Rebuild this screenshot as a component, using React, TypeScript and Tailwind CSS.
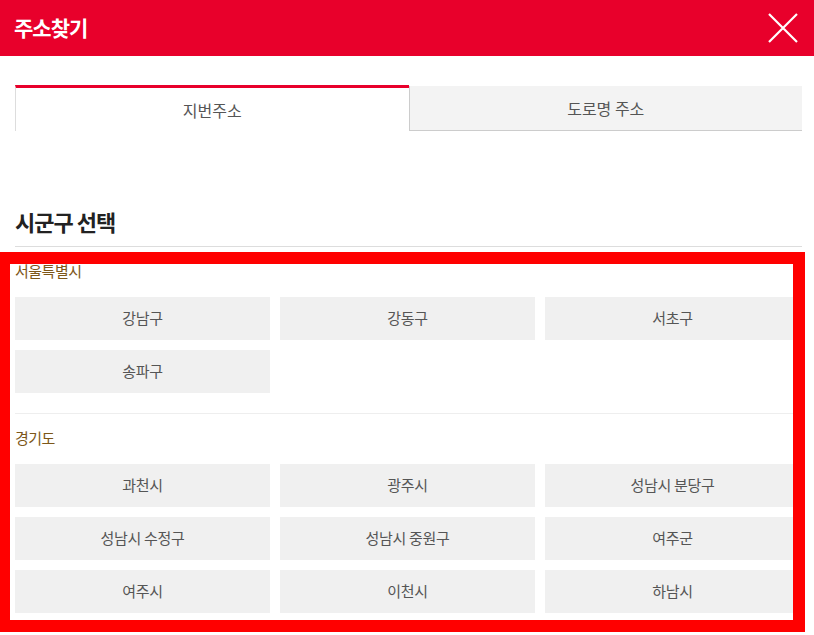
const FONT = "font-['Malgun_Gothic','Noto_Sans_CJK_KR','Noto_Sans',sans-serif]";

const groups = [
  { name: "서울특별시", items: ["강남구", "강동구", "서초구", "송파구"] },
  {
    name: "경기도",
    items: ["과천시", "광주시", "성남시 분당구", "성남시 수정구", "성남시 중원구", "여주군", "여주시", "이천시", "하남시"],
  },
];

function DistrictButton({ label }: { label: string }) {
  return (
    <button className="h-[43px] bg-[#f0f0f0] text-[15px] text-[#555] tracking-[-0.3px]">
      {label}
    </button>
  );
}

export default function App() {
  return (
    <div className={`relative w-[814px] h-[635px] overflow-hidden bg-white ${FONT}`}>
      <header className="h-[56px] bg-[#e8002b] flex items-center justify-between pl-[14px] pr-[16px]">
        <h1 className="text-white text-[21px] font-bold tracking-[-1px]">주소찾기</h1>
        <svg width="30" height="30" viewBox="0 0 30 30" fill="none" stroke="white" strokeWidth="2.2">
          <path d="M1 1L29 29M29 1L1 29" />
        </svg>
      </header>

      <div className="pl-[15px] pr-[12px]">
        <div className="mt-[29px] flex h-[46px]">
          <div className="flex-1 flex items-center justify-center border-t-[3px] border-t-[#e8002b] border-l border-l-[#ddd] bg-white text-[16px] text-[#555]">
            지번주소
          </div>
          <div className="flex-1 flex items-center justify-center mt-[1px] bg-[#f3f3f3] border-l border-l-[#ccc] border-b border-b-[#ccc] text-[16px] text-[#555]">
            도로명 주소
          </div>
        </div>

        <h2 className="mt-[75px] pb-[10px] border-b border-[#ddd] text-[22px] leading-[30px] font-bold text-[#222] tracking-[-1px]">
          시군구 선택
        </h2>

        {groups.map((g, i) => (
          <section key={g.name} className={i > 0 ? "mt-[20px] border-t border-[#eee]" : ""}>
            <p className="mt-[14px] text-[15px] leading-[20px] text-[#7d5719] tracking-[-0.5px]">
              {g.name}
            </p>
            <div className="mt-[16px] pr-[2px] grid grid-cols-3 gap-[10px]">
              {g.items.map((it) => (
                <DistrictButton key={it} label={it} />
              ))}
            </div>
          </section>
        ))}
      </div>

      <div className="absolute left-[-2px] top-[252px] w-[807px] h-[380px] border-[12px] border-[#ff0000] pointer-events-none" />
    </div>
  );
}
